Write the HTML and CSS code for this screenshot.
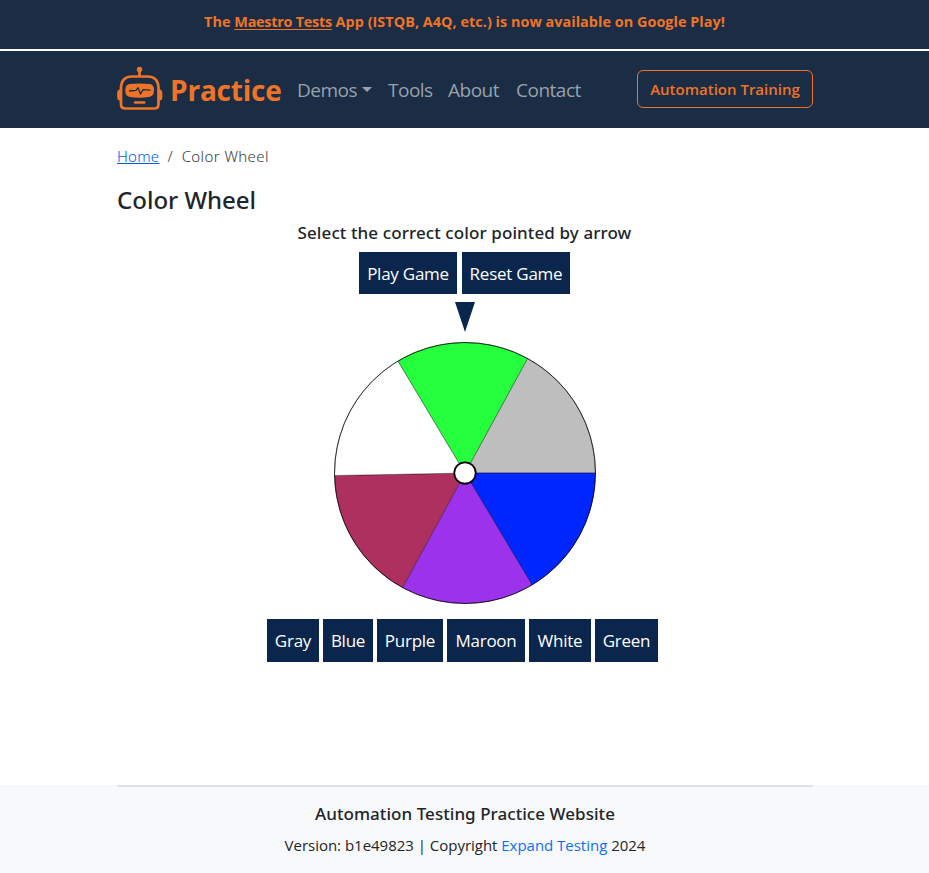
FILE: index.html
```html
<!DOCTYPE html>
<html lang="en">
<head>
<meta charset="utf-8">
<title>Color Wheel</title>
<link rel="stylesheet" href="styles.css">
</head>
<body>
<div class="banner">The <a href="#">Maestro Tests</a> App (ISTQB, A4Q, etc.) is now available on Google Play!</div>
<header class="navbar">
  <a class="brand" href="#">
    <svg class="logo" width="46" height="44" viewBox="0 0 46 44" fill="none" stroke="#f07427" stroke-width="2.700" stroke-linecap="round" stroke-linejoin="round">
      <circle cx="22.500" cy="3.500" r="2.700" fill="#f07427" stroke="none"/>
      <path d="M22.500 5v5M15 10.500h15.500c7.500 0 10.500 4.500 11 10.500v17c0 2.800-1.500 4.500-4.300 4.500H8.300C5.500 42.500 4 40.800 4 38v-17C4.500 15 7.500 10.500 15 10.500Z"/>
      <path d="M4 24.500c-2 0-2.500 1-2.500 2.500v4c0 1.500.5 2.500 2.500 2.500M41.500 24.500c2 0 2.500 1 2.500 2.500v4c0 1.500-.5 2.500-2.500 2.500" fill="#f07427"/>
      <path d="M12.500 18c7-.8 13.500-.8 20.500 0 3 .4 4 2.700 4 6s-1 6-4 6.700c-7 1.300-14 1.300-21 0-3-.7-3.700-3.400-3.700-6.700s1.200-5.600 4.200-6Z" fill="#f07427" stroke="none"/>
      <path d="M12.500 25l6.500-.6 2-2.700 2.500 6.300 2.500-4.300 7 .4" stroke="#1a2d44" stroke-width="1.300"/>
      <path d="M18 36.500h9.300" stroke-width="2.400"/>
    </svg>
    <span class="brand-name">Practice</span>
  </a>
  <nav class="links">
    <a class="demos" href="#">Demos</a>
    <a href="#">Tools</a>
    <a class="about" href="#">About</a>
    <a href="#">Contact</a>
  </nav>
  <a class="training" href="#">Automation Training</a>
</header>
<main>
  <div class="crumbs"><a href="#">Home</a><span class="slash">/</span><span class="current">Color Wheel</span></div>
  <h1>Color Wheel</h1>
  <section class="game">
    <p class="prompt">Select the correct color pointed by arrow</p>
    <div class="controls"><button class="play">Play Game</button><button class="reset">Reset Game</button></div>
    <div class="arrow"></div>
    <svg class="wheel" width="264" height="264" viewBox="-132 -132 264 264" stroke="#000" stroke-opacity=".5" stroke-width=".7">
      <path fill="#bebebe" d="M0 0L62.500-114.600A130.500 130.500 0 0 1 130.500 0Z"/>
      <path fill="#0026ff" d="M0 0H130.500A130.500 130.500 0 0 1 67 112Z"/>
      <path fill="#9d32ed" d="M0 0L67 112A130.500 130.500 0 0 1-62.500 114.600Z"/>
      <path fill="#ae305f" d="M0 0L-62.500 114.600A130.500 130.500 0 0 1-130.480 2.500Z"/>
      <path fill="#fff" d="M0 0L-130.480 2.500A130.500 130.500 0 0 1-67-112Z"/>
      <path fill="#26ff3d" d="M0 0L-67-112A130.500 130.500 0 0 1 62.500-114.600Z"/>
      <circle r="130.500" fill="none" stroke-opacity=".9" stroke-width=".8"/>
      <circle r="10.700" fill="#fff" stroke-opacity="1" stroke-width="1.700"/>
    </svg>
    <div class="choices"><button class="c1">Gray</button><button class="c2">Blue</button><button class="c3">Purple</button><button class="c4">Maroon</button><button class="c5">White</button><button class="c6">Green</button></div>
  </section>
</main>
<footer>
  <div class="footer-inner">
    <h2>Automation Testing Practice Website</h2>
    <p>Version: b1e49823 | Copyright <a href="#">Expand Testing</a> 2024</p>
  </div>
</footer>
</body>
</html>
```
FILE: styles.css
```css
* { box-sizing: border-box; }
body {
  margin: 0;
  height: 873px;
  display: flex;
  flex-direction: column;
  background: #fff;
  color: #212529;
  font-family: "Open Sans", "Noto Sans", sans-serif;
  font-size: 16px;
  line-height: 24px;
}
h1, h2, p { margin: 0; }
.banner {
  height: 51px;
  flex: none;
  padding-top: 10px;
  background: #1a2d44;
  border-bottom: 2px solid #fff;
  color: #f07427;
  font-size: 14.4px;
  font-weight: 700;
  letter-spacing: 0.04px;
  text-align: center;
}
.banner a { color: inherit; letter-spacing: -0.25px; text-underline-offset: 2px; }
.navbar {
  height: 77px;
  flex: none;
  display: flex;
  align-items: center;
  padding: 0 116px;
  background: #1a2d44;
}
.navbar a { text-decoration: none; white-space: nowrap; }
.brand { display: flex; align-items: center; width: 166px; color: #f07427; }
.logo { flex: none; margin: -3px 8px 0 1px; }
.brand-name { font-size: 28px; font-weight: 700; letter-spacing: -0.2px; margin-left: -1px; }
.links { display: flex; gap: 16px; margin-left: 15px; color: #98a1ac; font-size: 19px; font-weight: 400; letter-spacing: -0.5px; }
.links a { color: inherit; width: 44px; }
.links .about { width: 52px; }
.links .demos { width: 75px; display: flex; align-items: center; }
.demos::after {
  content: "";
  margin-left: auto;
  border: 5px solid transparent;
  border-top-color: currentColor;
  border-bottom: 0;
}
.training {
  width: 176px;
  height: 38px;
  margin: -2px 0 0 auto;
  border: 1px solid #f07427;
  border-radius: 6px;
  color: #f07427;
  font-size: 15px;
  font-weight: 600;
  line-height: 36px;
  text-align: center;
}
main { flex: 1; padding: 16px 117px 0; }
.crumbs { display: flex; font-family: "Noto Sans", "Open Sans", sans-serif; font-size: 15px; font-weight: 300; height: 24px; color: #33393e; }
.crumbs a { color: #0058f0; letter-spacing: 0.25px; }
.slash { margin: 0 9px 0 8px; }
.current { letter-spacing: 0.4px; }
h1 { margin-top: 16px; font-family: "Noto Sans", "Open Sans", sans-serif; font-size: 24px; font-weight: 500; line-height: 32px; }
.game { display: flex; flex-direction: column; align-items: center; }
.prompt { height: 36px; padding-top: 5px; font-family: "Noto Sans", "Open Sans", sans-serif; font-size: 17px; font-weight: 500; letter-spacing: 0.1px; }
button {
  flex: none;
  padding: 2px 0 0;
  border: 0;
  background: #0b264d;
  color: #fff;
  font: inherit;
  font-size: 17px;
  letter-spacing: -0.25px;
  white-space: nowrap;
}
.controls { display: flex; gap: 5px; height: 42px; }
.play { width: 98px; }
.reset { width: 108px; }
.arrow { width: 20px; height: 30px; margin: 8px 0 0 1px; background: #0b264d; clip-path: polygon(0 0, 100% 0, 50% 100%); }
.wheel { display: block; margin: 9px 0 0 1px; }
.choices { display: flex; gap: 4px; height: 43px; margin: 14px 4px 0 0; }
.choices button { padding-top: 0; }
.c1 { width: 52px; }
.c2 { width: 50px; }
.c3 { width: 66px; }
.c4 { width: 78px; }
.c5 { width: 62px; }
.c6 { width: 63px; }
footer { height: 88px; flex: none; padding: 0 116px 0 117px; background: #f8f9fa; text-align: center; }
.footer-inner { border-top: 2px solid #dee2e6; padding-top: 15px; }
h2 { font-family: "Noto Sans", "Open Sans", sans-serif; font-size: 17px; font-weight: 500; line-height: 24px; letter-spacing: 0.05px; }
footer p { margin-top: 7px; font-size: 15px; font-weight: 400; letter-spacing: -0.02px; }
footer a { color: #0d6efd; text-decoration: none; }
```
